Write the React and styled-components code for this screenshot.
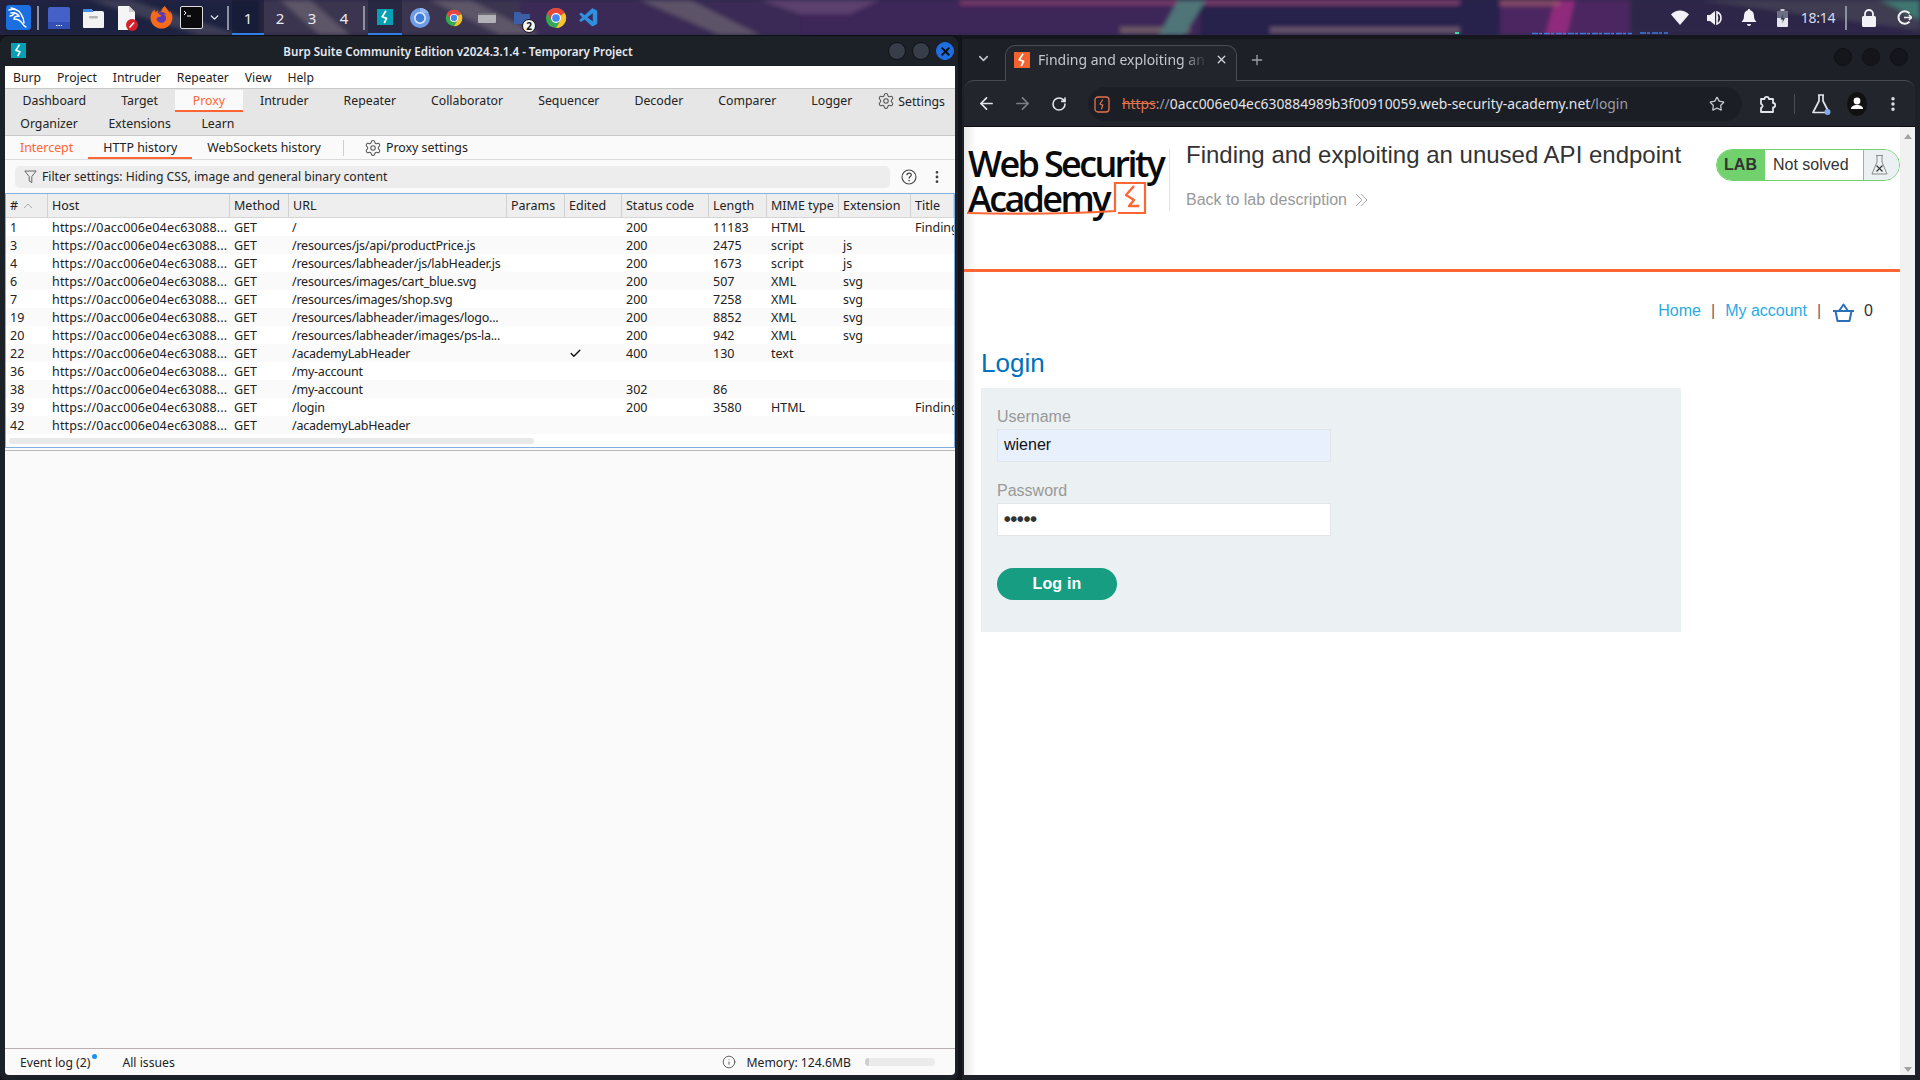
import React from "react";
import styled, { createGlobalStyle } from "styled-components";
import { Settings, Info, ArrowLeft, ArrowRight, RotateCw, Star, MoreVertical, ChevronDown, Plus, X, Check } from "lucide-react";
import { FaFirefoxBrowser } from "react-icons/fa";
import { VscVscode } from "react-icons/vsc";

const Global = createGlobalStyle`
  html, body { margin: 0; padding: 0; width: 1920px; height: 1080px; overflow: hidden; background: #12141a; }
  #root { width: 1920px; height: 1080px; }
  * { box-sizing: border-box; }
`;

const Screen = styled.div`
  width: 1920px; height: 1080px; display: flex; flex-direction: column;
  font-family: "Noto Sans", sans-serif; background: #12141a;
`;

/* ---------- desktop panel ---------- */
const TopBar = styled.header`
  position: relative; height: 35px; flex: none; display: flex; align-items: stretch; overflow: hidden;
  background: #2b2748;
`;
const Wallpaper = styled.svg`
  position: absolute; inset: 0; width: 1920px; height: 35px;
`;
const Slot = styled.div`
  position: relative; width: ${p => p.$w}px; flex: none; display: flex; align-items: center; justify-content: center;
  margin-left: ${p => p.$ml || 0}px;
`;
const Divider = styled.span`
  width: 2px; height: 24px; background: #8d90a0;
`;
const Workspace = styled.div`
  position: relative; width: 32px; flex: none; display: flex; align-items: center; justify-content: center;
  font-size: 15px; color: #e8ebf2; background: ${p => p.$on ? "rgba(20,25,50,.55)" : "transparent"};
  border-bottom: 2px solid ${p => p.$on ? "#2f7fe6" : "transparent"}; padding-top: 2px;
`;
const ActiveApp = styled(Slot)`
  background: rgba(20,25,50,.45); border-bottom: 2px solid #2f7fe6;
`;
const PanelSpacer = styled.div`flex: 1;`;
const Clock = styled.div`
  position: relative; width: 40px; flex: none; display: flex; align-items: center; justify-content: center;
  font-size: 14px; color: #d5dcec; letter-spacing: -0.3px;
`;
const CountBadge = styled.span`
  position: absolute; right: 4px; bottom: 2px; width: 14px; height: 14px; border-radius: 50%;
  background: #f4f4f4; color: #111; font-size: 10px; font-weight: 700; line-height: 13px; text-align: center;
  border: 1px solid #111;
`;

/* ---------- windows ---------- */
const Desktop = styled.div`
  flex: 1; display: flex; min-height: 0;
`;
const BurpWindow = styled.section`
  width: 958px; flex: none; display: flex; flex-direction: column; background: #1c2027;
  border-radius: 8px 8px 6px 6px; padding: 0 3px 5px 5px; border-top: 1px solid #0e1014;
`;
const BurpTitle = styled.div`
  position: relative; height: 30px; flex: none; display: flex; align-items: center; justify-content: center;
  color: #e6e8ee; font-size: 11.6px; font-weight: 600;
`;
const BurpTitleText = styled.span`
  margin-left: -44px;
`;
const TitleIcon = styled.span`
  position: absolute; left: 6px; top: 7px; display: flex;
`;
const WinButtons = styled.div`
  position: absolute; right: 1px; top: 6px; display: flex; gap: 6px;
`;
const WinDot = styled.span`
  width: 18px; height: 18px; border-radius: 50%; display: flex; align-items: center; justify-content: center;
  background: ${p => p.$close ? "#1f6fe3" : "#383d4a"}; border: 1px solid ${p => p.$close ? "#1f6fe3" : "#0f1116"};
  color: #0d1016;
`;
const MenuBar = styled.nav`
  height: 22px; flex: none; background: #fff; display: flex; align-items: center; padding-left: 8px; gap: 16px;
  font-size: 12.2px; color: #222;
`;
const TabsBlock = styled.div`
  flex: none; height: 48px; background: #e6e6e6; border-top: 1px solid #c9c9c9; border-bottom: 1px solid #c9c9c9;
  display: flex; flex-direction: column; padding-top: 1px;
`;
const TabRow = styled.div`
  height: 23px; display: flex; align-items: stretch;
`;
const LowerTabRow = styled(TabRow)`
  padding-top: 1px;
`;
const Tab = styled.div`
  display: flex; align-items: center; padding: 0 ${p => p.$pad ?? 17.5}px; font-size: 12.3px; white-space: nowrap; flex: none;
  color: ${p => p.$on ? "#ff6633" : "#222"};
  background: ${p => p.$on ? "#fafafa" : "transparent"};
  border-bottom: 2px solid ${p => p.$on ? "#ff6633" : "transparent"};
`;
const SettingsTab = styled.div`
  margin-left: auto; padding-right: 10px; display: flex; align-items: center; gap: 3px; font-size: 12.3px; color: #222;
`;
const SubTabs = styled.div`
  height: 24px; flex: none; background: #fafafa; border-bottom: 1px solid #dcdcdc; display: flex; align-items: stretch;
  font-size: 12.4px; color: #222;
`;
const SubTab = styled.div`
  display: flex; align-items: center; flex: none; padding: 1px ${p => p.$pad ?? 15}px 0;
  color: ${p => p.$orange ? "#ff6633" : "#222"};
  border-bottom: 2px solid ${p => p.$on ? "#ff6633" : "transparent"};
`;
const SubDivider = styled.span`
  width: 1px; height: 16px; background: #cfcfcf; align-self: center; margin: 0 20px 0 7px;
`;
const ProxySettings = styled.div`
  display: flex; align-items: center; gap: 4px;
`;
const FilterRow = styled.div`
  height: 33px; flex: none; background: #fafafa; display: flex; align-items: center; padding: 0 10px;
`;
const FilterPill = styled.div`
  width: 884px; height: 22px; background: #ededed; border-radius: 5px; display: flex; align-items: center;
  padding-left: 9px; gap: 5px; font-size: 12.15px; color: #222;
`;
const FilterTools = styled.div`
  display: flex; align-items: center; gap: 12px; margin-left: 11px;
`;
const Table = styled.div`
  flex: none; height: 255px; background: #fff; border: 1px solid #7fb0e0; position: relative; overflow: hidden;
`;
const Row = styled.div`
  display: grid; grid-template-columns: 42px 182px 59px 218px 58px 57px 87px 58px 72px 72px 43px;
  height: 18px; align-items: center; font-size: 12.5px; color: #222;
  background: ${p => p.$alt ? "#fafafa" : "#fff"};
`;
const HeadRow = styled(Row)`
  height: 24px; background: #eeeeee; border-bottom: 1px solid #d6d6d6;
`;
const HeadCell = styled.div`
  height: 100%; display: flex; align-items: center; padding-left: 4px; gap: 5px; border-right: 1px solid #d2d2d2; overflow: hidden; white-space: nowrap;
`;
const Cell = styled.div`
  padding-left: 4px; overflow: hidden; white-space: nowrap; display: flex; align-items: center;
`;
const HostCell = styled(Cell)`
  letter-spacing: .16px;
`;
const UrlCell = styled(Cell)`
  letter-spacing: -.22px; padding-left: 3px;
`;
const HScroll = styled.div`
  margin: 4px 0 0 3px; width: 525px; height: 6px; border-radius: 3px; background: #e8e8e8;
`;
const PaneSplit = styled.div`
  height: 3px; flex: none; background: #fafafa; border-bottom: 1px solid #b9b9b9;
`;
const LowerPane = styled.div`
  flex: 1; background: #fafafa;
`;
const StatusBar = styled.footer`
  height: 27px; flex: none; background: #fafafa; border-top: 1px solid #b8b0b0; display: flex; align-items: center;
  font-size: 12.2px; color: #222; padding-left: 15px; border-radius: 0 0 4px 4px;
`;
const EventLog = styled.span`
  position: relative; margin-right: 32px;
`;
const Dot = styled.span`
  position: absolute; right: -7px; top: 0; width: 5px; height: 5px; border-radius: 50%; background: #1e90f0;
`;
const StatusRight = styled.div`
  margin-left: auto; display: flex; align-items: center; gap: 10px; padding-right: 20px;
`;
const MemTrack = styled.div`
  width: 70px; height: 8px; border-radius: 4px; background: #ebebeb; margin-left: 4px; overflow: hidden;
`;
const MemFill = styled.div`
  height: 100%; background: #cfcfcf;
`;

/* ---------- browser ---------- */
const ChromeWindow = styled.section`
  flex: 1; margin-left: 4px; padding: 0 5px 5px 2px; background: #1d2026; display: flex; flex-direction: column; min-width: 0;
  border-top: 4px solid #15171c;
`;
const TabStrip = styled.div`
  position: relative; height: 41px; flex: none; display: flex; align-items: flex-end; padding-left: 41px; z-index: 1;
`;
const StripChevron = styled.span`
  position: absolute; left: 12px; top: 12px; color: #c6c9d0; display: flex;
`;
const BrowserTab = styled.div`
  width: 232px; height: 36px; margin-bottom: -1px; background: #22252c; border: 1px solid #4a4d55; border-bottom: none; border-radius: 10px 10px 0 0;
  display: flex; align-items: center; padding: 0 8px 8px; gap: 8px; font-size: 14px; color: #c4c7ce; overflow: hidden;
`;
const TabLabel = styled.span`
  flex: 1; overflow: hidden; white-space: nowrap;
  -webkit-mask-image: linear-gradient(90deg, #000 85%, transparent 100%);
  mask-image: linear-gradient(90deg, #000 85%, transparent 100%);
`;
const NewTab = styled.span`
  margin: 0 0 12px 12px; color: #9da0a8; display: flex;
`;
const BrowserWinButtons = styled.div`
  position: absolute; right: 7px; top: 9px; display: flex; gap: 10px;
`;
const BrowserWinDot = styled.span`
  width: 18px; height: 18px; border-radius: 50%; background: #14161b; border: 1px solid #0f1115;
`;
const Toolbar = styled.div`
  height: 47px; flex: none; background: #22252c; border-top: 1px solid #474a52; border-radius: 10px 10px 0 0; display: flex; align-items: center; color: #e3e5ea;
  border-bottom: 1px solid #0d0e12;
`;
const ToolSlot = styled.span`
  position: relative; width: ${p => p.$w}px; flex: none; display: flex; align-items: center; justify-content: center;
  color: ${p => p.$dim ? "#7c7f87" : "#e3e5ea"};
`;
const Omnibox = styled.div`
  width: 654px; height: 34px; border-radius: 17px; background: #1b1e24; flex: none; display: flex; align-items: center;
  padding-left: 34px; font-size: 13.85px; margin-left: 6px; position: relative; white-space: nowrap; color: #e3e5ea;
`;
const SiteIcon = styled.span`
  position: absolute; left: 6px; top: 9px; display: flex;
`;
const Scheme = styled.span`
  color: #e2734f; text-decoration: line-through;
`;
const Dim = styled.span`color: #9a9da5;`;
const OmniStar = styled.span`
  position: absolute; right: 17px; top: 9px; display: flex; color: #c6c9d0;
`;
const ToolSep = styled.span`
  width: 1px; height: 20px; background: #4b4e56; flex: none;
`;
const PageArea = styled.div`
  flex: 1; display: flex; min-height: 0; background: #fff;
`;
const Page = styled.main`
  flex: 1; background: linear-gradient(90deg, #e8e8e8 0, #fff 12px); font-family: "Liberation Sans", Arial, sans-serif; min-width: 0;
`;
const ScrollTrack = styled.div`
  width: 15px; flex: none; background: #f1f1f1; display: flex; flex-direction: column; justify-content: space-between; align-items: center; padding: 7px 0 3px;
`;
const ArrowUp = styled.span`
  width: 0; height: 0; border-left: 4px solid transparent; border-right: 4px solid transparent; border-bottom: 5px solid #a3a3a3;
`;
const ArrowDown = styled(ArrowUp)`
  border-bottom: 0; border-top: 5px solid #a3a3a3;
`;
const LabHeader = styled.div`
  height: 142px; display: flex; align-items: flex-start; padding-top: 13px;
`;
const Logo = styled.div`
  position: relative; width: 201px; margin: 6px 0 0 4px; height: 73px; flex: none;
  font-family: "Open Sans", sans-serif; font-size: 36px; line-height: 35px; color: #0a0a0a; letter-spacing: -2.65px; font-weight: 600; white-space: nowrap;
`;
const LogoLine = styled.div`
  height: 35px;
`;
const LogoMark = styled.svg`
  position: absolute; left: -2px; top: 31px;
`;
const HeaderSep = styled.div`
  width: 1px; height: 62px; background: #e2e2e2; flex: none; margin-top: 9px;
`;
const LabTitleBlock = styled.div`
  flex: 1; padding-left: 16px; min-width: 0;
`;
const LabTitle = styled.h2`
  margin: 0; font-size: 24px; font-weight: 400; line-height: 30px; color: #333; white-space: nowrap;
`;
const BackLink = styled.div`
  margin-top: 20px; font-size: 16px; line-height: 20px; color: #999; display: flex; align-items: center; gap: 8px;
`;
const StatusBadge = styled.div`
  display: flex; width: 184px; height: 32px; margin-top: 9px; border: 1px solid #70d16d; border-radius: 16px; overflow: hidden; flex: none;
`;
const BadgeLab = styled.div`
  width: 49px; margin: -1px 0 -1px -1px; background: #70d16d; color: #333; font-weight: 700; font-size: 16px; display: flex; align-items: center; justify-content: center;
`;
const BadgeState = styled.div`
  flex: 1; display: flex; align-items: center; padding-left: 8px; font-size: 16px; color: #333; background: #fff;
`;
const BadgeFlask = styled.div`
  width: 36px; background: #ebf0f2; border-left: 1px solid #70d16d; display: flex; align-items: center; justify-content: center; padding-right: 4px;
`;
const OrangeRule = styled.div`
  height: 3px; background: #ff6633;
`;
const Nav = styled.nav`
  display: flex; justify-content: flex-end; align-items: center; height: 22px; margin-top: 28px; padding-right: 27px; font-size: 16px; color: #333;
`;
const NavLink = styled.span`color: #29abe2;`;
const NavBar = styled.span`
  color: #666; margin: 0 10px;
`;
const Cart = styled.span`
  display: flex; margin: 2px 9px 0 1px;
`;
const Content = styled.div`
  padding-left: 17px;
`;
const LoginTitle = styled.h1`
  margin: 25px 0 9px; font-size: 26px; font-weight: 400; line-height: 32px; color: #0071bc;
`;
const Panel = styled.form`
  width: 700px; height: 244px; background: #ebf0f2; padding: 19px 16px 0;
`;
const Label = styled.div`
  font-size: 16px; line-height: 20px; color: #999; margin-top: ${p => p.$mt || 0}px;
`;
const Field = styled.div`
  width: 334px; height: 33px; margin-top: 2px; border: 1px solid #e2e6e8; padding-left: 6px; display: flex; align-items: center;
  font-size: 16px; padding-bottom: 2px; color: ${p => p.$filled ? "#111" : "#333"}; background: ${p => p.$filled ? "#e8f0fe" : "#fff"};
`;
const Secret = styled.span`
  font-size: 7.5px; letter-spacing: 0; color: #333; font-family: "DejaVu Sans", sans-serif;
`;
const LoginBtn = styled.button`
  display: block; width: 120px; height: 32px; margin-top: 32px; border: 0; border-radius: 16px; background: #179d82; color: #fff;
  font: 700 16px "Liberation Sans", Arial, sans-serif; letter-spacing: .2px;
`;

/* ---------- drawings ---------- */
const Bolt = ({ size = 16, color = "#fff", bg = "#06a0b5" }) => (
  <svg width={size} height={size} viewBox="0 0 16 16"><rect width="16" height="16" fill={bg} />
    <path d="M9 1.8 5.2 7.8l4.4 1.6-2.4 4.6" fill="none" stroke={color} strokeWidth="1.7" strokeLinejoin="round" /></svg>
);
const ChromeIcon = ({ size = 22 }) => (
  <svg width={size} height={size} viewBox="0 0 24 24">
    <circle cx="12" cy="12" r="11" fill="#34a853" />
    <path d="M12 12 21.53 6.5A11 11 0 0 0 2.47 6.5L7.24 14.75z" fill="#e8453c" />
    <path d="M12 12h0l9.53-5.5A11 11 0 0 1 12 23l4.76-8.25z" fill="#fbc02d" />
    <circle cx="12" cy="12" r="5.4" fill="#fff" /><circle cx="12" cy="12" r="4.2" fill="#4285f4" />
  </svg>
);
const Kali = () => (
  <svg width="25" height="25" viewBox="0 0 25 25">
    <rect width="25" height="25" rx="3" fill="#1b6fe0" />
    <path d="M3 5c5-2 10 0 12 4 2 3 3 6 3 9M5 8c4-1 6 0 8 3-3 0-5 1-5 3 3 0 6 1 8 4 1 2 2 3 4 4M9 4 5 3M4 11c2 0 3-1 4-2" fill="none" stroke="#fff" strokeWidth="1.4" strokeLinecap="round" />
  </svg>
);
const TermBlue = () => (
  <svg width="22" height="22" viewBox="0 0 22 22"><rect width="22" height="22" rx="2" fill="#4561c8" /><rect y="15" width="22" height="7" fill="#3350b4" /><path d="M8 18.5h6" stroke="#fff" strokeDasharray="1.5 1" /></svg>
);
const Files = () => (
  <svg width="23" height="22" viewBox="0 0 23 22"><path d="M1 4a2 2 0 0 1 2-2h6l2 2h9a2 2 0 0 1 2 2v14a1 1 0 0 1-1 1H2a1 1 0 0 1-1-1z" fill="#f2f2f2" /><path d="M1 6V3a1 1 0 0 1 1-1h7l3 3H1z" fill="#3f8be8" /><rect x="7" y="9" width="9" height="2.5" rx="1" fill="#b5b5b5" /></svg>
);
const Doc = () => (
  <svg width="22" height="26" viewBox="0 0 22 26"><path d="M1 1h11l6 6v18H1z" fill="#f5f5f5" /><path d="M12 1l6 6h-6z" fill="#cfcfcf" /><circle cx="15" cy="20" r="6" fill="#d4202a" /><path d="M12.5 22.5l4.5-5" stroke="#fff" strokeWidth="1.6" /></svg>
);
const Term = () => (
  <svg width="23" height="23" viewBox="0 0 23 23"><rect x=".5" y=".5" width="22" height="22" rx="1.5" fill="#0b0b0d" stroke="#ddd" /><path d="M4 5l2 2-2 2M7 10h4" stroke="#fff" fill="none" /></svg>
);
const Chromium = () => (
  <svg width="22" height="22" viewBox="0 0 22 22"><circle cx="11" cy="11" r="10" fill="#6f9ce6" /><path d="M11 1a10 10 0 0 1 8.7 5H11z" fill="#93b6ee" /><circle cx="11" cy="11" r="6" fill="#dbe7fb" /><circle cx="11" cy="11" r="4.4" fill="#3f7cdc" /></svg>
);
const Thunar = () => (
  <svg width="18" height="10" viewBox="0 0 18 10"><rect width="18" height="10" rx="1" fill="#b2b2b8" /><rect width="18" height="2" fill="#6e6e74" /></svg>
);
const SmallFolder = () => (
  <svg width="16" height="14" viewBox="0 0 16 14"><path d="M0 2a1 1 0 0 1 1-1h5l2 2h7a1 1 0 0 1 1 1v9H0z" fill="#3a5fa8" /></svg>
);
const Firefox = () => (
  <svg width="24" height="25" viewBox="0 0 24 25">
    <circle cx="12" cy="14" r="7" fill="#5b3bb5" />
  </svg>
);
const FirefoxFace = styled.span`
  position: absolute; display: flex;
`;
const Funnel = () => (
  <svg width="13" height="14" viewBox="0 0 13 14"><path d="M.8 1h11.4L7.8 6.6v6l-2.6-1.6v-4.4z" fill="none" stroke="#666" strokeWidth="1" strokeLinejoin="round" /></svg>
);
const Help = () => (
  <svg width="16" height="16" viewBox="0 0 16 16"><circle cx="8" cy="8" r="7" fill="none" stroke="#444" strokeWidth="1.1" /><path d="M5.9 6.2c0-2.8 4.4-2.8 4.4-.2 0 1.6-2.2 1.6-2.2 3.4" fill="none" stroke="#444" strokeWidth="1.2" /><circle cx="8.1" cy="11.6" r=".8" fill="#444" /></svg>
);
const WifiIcon = () => (
  <svg width="18" height="16" viewBox="0 0 18 16"><path d="M0 4.5C5-.8 13-.8 18 4.5L9 15z" fill="#f2f2f6" /></svg>
);
const SpeakerIcon = () => (
  <svg width="18" height="18" viewBox="0 0 18 18"><path d="M1 6h3l5-4v14l-5-4H1z" fill="#f2f2f6" /><path d="M11 3a6.5 6.5 0 0 1 0 12z" fill="none" stroke="#f2f2f6" strokeWidth="1.6" /><path d="M11 6.5a3 3 0 0 1 0 5z" fill="#f2f2f6" /></svg>
);
const BellIcon = () => (
  <svg width="16" height="18" viewBox="0 0 16 18"><path d="M8 0c.8 0 1.2.5 1.2 1.2C11.8 2 13 4 13 7c0 3 1 4.5 2.5 6h-15C2 11.5 3 10 3 7c0-3 1.2-5 3.8-5.8C6.8.5 7.2 0 8 0z" fill="#f2f2f6" /><path d="M6 15h4a2 2 0 0 1-4 0z" fill="#f2f2f6" /></svg>
);
const BatteryIcon = () => (
  <svg width="11" height="18" viewBox="0 0 11 18"><rect x="3.5" width="4" height="2" fill="#c8cad4" /><rect y="2" width="11" height="16" rx="1" fill="#e6e7ee" /><rect y="2" width="11" height="7" fill="#6d7083" /><path d="M6.5 4.5 3.5 10.5h2.5l-1 4 3-5.5h-2.5z" fill="#33364a" /></svg>
);
const LockIcon = () => (
  <svg width="14" height="18" viewBox="0 0 14 18"><rect y="7" width="14" height="11" rx="1.5" fill="#f2f2f6" /><path d="M3 8V5a4 4 0 0 1 8 0v3" fill="none" stroke="#f2f2f6" strokeWidth="1.8" /></svg>
);
const PowerIcon = () => (
  <svg width="15" height="15" viewBox="0 0 15 15"><path d="M12.5 3.3a6.3 6.3 0 1 0 0 8.4" fill="none" stroke="#f2f2f6" strokeWidth="2" /><path d="M7 7.5h7.5M12 5l2.5 2.5L12 10" fill="none" stroke="#f2f2f6" strokeWidth="1.6" /></svg>
);
const Extension = () => (
  <svg width="20" height="20" viewBox="0 0 20 20"><path d="M3 5h3.5a2.2 2.2 0 0 1 4.4 0H15v4a2.2 2.2 0 0 1 0 4.4V18H3v-4a2 2 0 0 0 1-3.4 2 2 0 0 0-1-.6z" fill="none" stroke="#e3e5ea" strokeWidth="1.8" strokeLinejoin="round" /></svg>
);
const LabFlask = () => (
  <svg width="20" height="22" viewBox="0 0 20 22"><path d="M7 2h6M8 2v6L2 19.5h16L12 8V2" fill="none" stroke="#e3e5ea" strokeWidth="1.7" strokeLinejoin="round" /><circle cx="16.5" cy="19" r="3" fill="#84a9ea" /></svg>
);
const ProfileIcon = () => (
  <svg width="20" height="24" viewBox="0 0 20 24"><ellipse cx="10" cy="12" rx="10" ry="12" fill="#111" /><circle cx="10" cy="9" r="3.4" fill="#fff" /><path d="M4 17c0-3 3-4 6-4s6 1 6 4z" fill="#fff" /></svg>
);
const SiteBadge = () => (
  <svg width="16" height="17" viewBox="0 0 16 17"><rect x="1" y="1" width="14" height="15" rx="3" fill="none" stroke="#e2734f" strokeWidth="1.3" /><path d="M8.8 3.5 6 8l2.8 1.2-1.4 4" fill="none" stroke="#e2734f" strokeWidth="1.2" /></svg>
);
const Chevrons = () => (
  <svg width="13" height="14" viewBox="0 0 13 14"><path d="M1 1l6 6-6 6M6 1l6 6-6 6" fill="none" stroke="#aaa" strokeWidth="1" /></svg>
);
const FlaskX = () => (
  <svg width="17" height="22" viewBox="0 0 17 22"><path d="M5 1.5h7M6 1.5v6.5L1 20h15L11 8V1.5" fill="none" stroke="#8a8a8a" strokeWidth="1" strokeLinejoin="round" /><path d="M5.5 11.5l6 6M11.5 11.5l-6 6" stroke="#333" strokeWidth="1.1" /></svg>
);
const Basket = () => (
  <svg width="23" height="19" viewBox="0 0 23 19"><path d="M1 8h21M3.5 8l2 10h12l2-10M7 8l4.5-6.5L16 8" fill="none" stroke="#2a6fb8" strokeWidth="2" strokeLinejoin="round" /></svg>
);

const rows = [
  ["1", "/", "200", "11183", "HTML", "", "Finding"],
  ["3", "/resources/js/api/productPrice.js", "200", "2475", "script", "js", ""],
  ["4", "/resources/labheader/js/labHeader.js", "200", "1673", "script", "js", ""],
  ["6", "/resources/images/cart_blue.svg", "200", "507", "XML", "svg", ""],
  ["7", "/resources/images/shop.svg", "200", "7258", "XML", "svg", ""],
  ["19", "/resources/labheader/images/logo...", "200", "8852", "XML", "svg", ""],
  ["20", "/resources/labheader/images/ps-la...", "200", "942", "XML", "svg", ""],
  ["22", "/academyLabHeader", "400", "130", "text", "", "", true],
  ["36", "/my-account", "", "", "", "", ""],
  ["38", "/my-account", "302", "86", "", "", ""],
  ["39", "/login", "200", "3580", "HTML", "", "Finding"],
  ["42", "/academyLabHeader", "", "", "", "", ""],
];
const heads = ["Host", "Method", "URL", "Params", "Edited", "Status code", "Length", "MIME type", "Extension", "Title"];
const firstTabs = ["Dashboard", "Target", "Proxy", "Intruder", "Repeater", "Collaborator", "Sequencer", "Decoder", "Comparer", "Logger"];

export default function App() {
  return (
    <Screen>
      <Global />
      <TopBar>
        <Wallpaper viewBox="0 0 1920 35" preserveAspectRatio="none">
          <defs><filter id="soft" x="-5%" y="-30%" width="110%" height="160%"><feGaussianBlur stdDeviation="2.2" /></filter></defs>
          <g filter="url(#soft)">
            <rect x="0" y="0" width="260" height="35" fill="#1f2440" />
            <rect x="260" y="0" width="260" height="35" fill="#3a3450" />
            <rect x="520" y="0" width="280" height="35" fill="#3a2a55" />
            <rect x="800" y="0" width="400" height="35" fill="#3c2858" />
            <rect x="1200" y="0" width="300" height="35" fill="#26224c" />
            <rect x="1500" y="0" width="130" height="35" fill="#4b2660" />
            <rect x="1630" y="0" width="290" height="35" fill="#2e2848" />
            <path d="M430 0 500 35h40L470 0zM640 0 720 35h40L690 0zM280 0l40 35h30L310 0z" fill="#6a6070" opacity=".75" />
            <path d="M760 0h120l-30 14h-50z" fill="#6a4a78" opacity=".7" />
            <rect x="960" y="0" width="500" height="5" fill="#7a3a6a" />
            <rect x="1120" y="27" width="70" height="6" fill="#6e5a66" />
            <rect x="1270" y="27" width="190" height="6" fill="#66526a" />
            <path d="M1178 0h28l-22 35h-25z" fill="#4f7578" />
            <path d="M1555 0h20l-8 35h-22z" fill="#a02a82" opacity=".8" />
            <path d="M1500 0h60v6h-60z" fill="#a05868" opacity=".7" />
            <path d="M1700 0 1920 30v-30z" fill="#4a4458" opacity=".7" />
            <path d="M1880 0h40v20z" fill="#3f8a7a" opacity=".75" />
            <path d="M90 0 200 35h40L130 0z" fill="#4a4a60" opacity=".7" />
          </g>
          <path d="M1455 33h4" stroke="#3ad6b0" strokeWidth="2" />
          <path d="M1532 33.5h100M1640 33h28" stroke="#3a7ae0" strokeWidth="1.4" strokeDasharray="6 1 3 2" />
        </Wallpaper>
        <Slot $w={28} $ml={4}><Kali /></Slot>
        <Slot $w={12}><Divider /></Slot>
        <Slot $w={30}><TermBlue /></Slot>
        <Slot $w={38}><Files /></Slot>
        <Slot $w={32}><Doc /></Slot>
        <Slot $w={34}>
          <Firefox />
          <FirefoxFace><FaFirefoxBrowser size={23} color="#f56a1c" /></FirefoxFace>
        </Slot>
        <Slot $w={26}><Term /></Slot>
        <Slot $w={20}><ChevronDown size={13} color="#e8ebf2" strokeWidth={2.5} /></Slot>
        <Slot $w={8}><Divider /></Slot>
        <Workspace $on>1</Workspace>
        <Workspace>2</Workspace>
        <Workspace>3</Workspace>
        <Workspace>4</Workspace>
        <Slot $w={8}><Divider /></Slot>
        <ActiveApp $w={34}><Bolt size={16} /></ActiveApp>
        <Slot $w={36}><Chromium /></Slot>
        <Slot $w={32}><ChromeIcon size={18} /></Slot>
        <Slot $w={34}><Thunar /></Slot>
        <Slot $w={36}><SmallFolder /><CountBadge>2</CountBadge></Slot>
        <Slot $w={32}><ChromeIcon size={22} /></Slot>
        <Slot $w={34}><VscVscode size={22} color="#2f8fe0" /></Slot>
        <PanelSpacer />
        <Slot $w={35}><WifiIcon /></Slot>
        <Slot $w={35}><SpeakerIcon /></Slot>
        <Slot $w={34}><BellIcon /></Slot>
        <Slot $w={32}><BatteryIcon /></Slot>
        <Clock>18:14</Clock>
        <Slot $w={16}><Divider /></Slot>
        <Slot $w={30}><LockIcon /></Slot>
        <Slot $w={32} $ml={4}><PowerIcon /></Slot>
      </TopBar>
      <Desktop>
        <BurpWindow>
          <BurpTitle>
            <TitleIcon><Bolt size={15} /></TitleIcon>
            <BurpTitleText>Burp Suite Community Edition v2024.3.1.4 - Temporary Project</BurpTitleText>
            <WinButtons>
              <WinDot /><WinDot />
              <WinDot $close><X size={13} strokeWidth={3.5} /></WinDot>
            </WinButtons>
          </BurpTitle>
          <MenuBar>
            {["Burp", "Project", "Intruder", "Repeater", "View", "Help"].map(m => <span key={m}>{m}</span>)}
          </MenuBar>
          <TabsBlock>
            <TabRow>
              {firstTabs.map(t => (
                <Tab key={t} $on={t === "Proxy"}>{t}</Tab>
              ))}
              <SettingsTab><Settings size={18} color="#555" strokeWidth={1.4} />Settings</SettingsTab>
            </TabRow>
            <LowerTabRow>
              {["Organizer", "Extensions", "Learn"].map(t => <Tab key={t} $pad={15.3}>{t}</Tab>)}
            </LowerTabRow>
          </TabsBlock>
          <SubTabs>
            <SubTab $orange>Intercept</SubTab>
            <SubTab $on>HTTP history</SubTab>
            <SubTab>WebSockets history</SubTab>
            <SubDivider />
            <ProxySettings><Settings size={18} color="#555" strokeWidth={1.4} />Proxy settings</ProxySettings>
          </SubTabs>
          <FilterRow>
            <FilterPill><Funnel />Filter settings: Hiding CSS, image and general binary content</FilterPill>
            <FilterTools><Help /><MoreVertical size={16} color="#444" strokeWidth={2.2} /></FilterTools>
          </FilterRow>
          <Table>
            <HeadRow>
              <HeadCell>#<svg width="10" height="6" viewBox="0 0 10 6"><path d="M1 5l4-4 4 4" fill="none" stroke="#aaa" /></svg></HeadCell>
              {heads.map(h => <HeadCell key={h}>{h}</HeadCell>)}
            </HeadRow>
            {rows.map((r, i) => (
              <Row key={r[0]} $alt={i % 2 === 1}>
                <Cell>{r[0]}</Cell>
                <HostCell>https://0acc006e04ec63088...</HostCell>
                <Cell>GET</Cell>
                <UrlCell>{r[1]}</UrlCell>
                <Cell />
                <Cell>{r[7] && <Check size={13} color="#111" strokeWidth={2.6} />}</Cell>
                <Cell>{r[2]}</Cell>
                <Cell>{r[3]}</Cell>
                <Cell>{r[4]}</Cell>
                <Cell>{r[5]}</Cell>
                <Cell>{r[6]}</Cell>
              </Row>
            ))}
            <HScroll />
          </Table>
          <PaneSplit />
          <LowerPane />
          <StatusBar>
            <EventLog>Event log (2)<Dot /></EventLog>
            <span>All issues</span>
            <StatusRight>
              <Info size={14} color="#444" strokeWidth={1.4} />
              <span>Memory: 124.6MB</span>
              <MemTrack><MemFill style={{ width: "6%" }} /></MemTrack>
            </StatusRight>
          </StatusBar>
        </BurpWindow>
        <ChromeWindow>
          <TabStrip>
            <StripChevron><ChevronDown size={15} strokeWidth={2.4} /></StripChevron>
            <BrowserTab>
              <Bolt size={16} bg="#f4622e" />
              <TabLabel>Finding and exploiting an unused API endpoint</TabLabel>
              <X size={13} color="#d5d7dc" strokeWidth={2.4} />
            </BrowserTab>
            <NewTab><Plus size={16} strokeWidth={2} /></NewTab>
            <BrowserWinButtons><BrowserWinDot /><BrowserWinDot /><BrowserWinDot /></BrowserWinButtons>
          </TabStrip>
          <Toolbar>
            <ToolSlot $w={45}><ArrowLeft size={19} strokeWidth={2.2} /></ToolSlot>
            <ToolSlot $w={27} $dim><ArrowRight size={19} strokeWidth={2.2} /></ToolSlot>
            <ToolSlot $w={46}><RotateCw size={16} strokeWidth={2.4} /></ToolSlot>
            <Omnibox>
              <SiteIcon><SiteBadge /></SiteIcon>
              <span><Scheme>https</Scheme><Dim>://</Dim>0acc006e04ec630884989b3f00910059.web-security-academy.net<Dim>/login</Dim></span>
              <OmniStar><Star size={16} strokeWidth={1.9} /></OmniStar>
            </Omnibox>
            <ToolSlot $w={52}><Extension /></ToolSlot>
            <ToolSep />
            <ToolSlot $w={52}><LabFlask /></ToolSlot>
            <ToolSlot $w={20}><ProfileIcon /></ToolSlot>
            <ToolSlot $w={52}><MoreVertical size={18} strokeWidth={2.6} /></ToolSlot>
          </Toolbar>
          <PageArea>
            <Page>
              <LabHeader>
                <Logo>
                  <LogoLine>Web Security</LogoLine>
                  <LogoLine>Academy</LogoLine>
                  <LogoMark width="184" height="40" viewBox="0 0 184 40">
                    <path d="M1 36c40 1 100 1 148-2V6h30v30h-27" fill="none" stroke="#ff6633" strokeWidth="2.2" />
                    <path d="M168 9l-8 9 8 5-5 6h10" fill="none" stroke="#ff6633" strokeWidth="2.4" strokeLinejoin="round" />
                  </LogoMark>
                </Logo>
                <HeaderSep />
                <LabTitleBlock>
                  <LabTitle>Finding and exploiting an unused API endpoint</LabTitle>
                  <BackLink>Back to lab description <Chevrons /></BackLink>
                </LabTitleBlock>
                <StatusBadge>
                  <BadgeLab>LAB</BadgeLab>
                  <BadgeState>Not solved</BadgeState>
                  <BadgeFlask><FlaskX /></BadgeFlask>
                </StatusBadge>
              </LabHeader>
              <OrangeRule />
              <Nav>
                <NavLink>Home</NavLink><NavBar>|</NavBar>
                <NavLink>My account</NavLink><NavBar>|</NavBar>
                <Cart><Basket /></Cart>0
              </Nav>
              <Content>
                <LoginTitle>Login</LoginTitle>
                <Panel>
                  <Label>Username</Label>
                  <Field $filled>wiener</Field>
                  <Label $mt={19}>Password</Label>
                  <Field><Secret>●●●●●</Secret></Field>
                  <LoginBtn type="button">Log in</LoginBtn>
                </Panel>
              </Content>
            </Page>
            <ScrollTrack><ArrowUp /><ArrowDown /></ScrollTrack>
          </PageArea>
        </ChromeWindow>
      </Desktop>
    </Screen>
  );
}
